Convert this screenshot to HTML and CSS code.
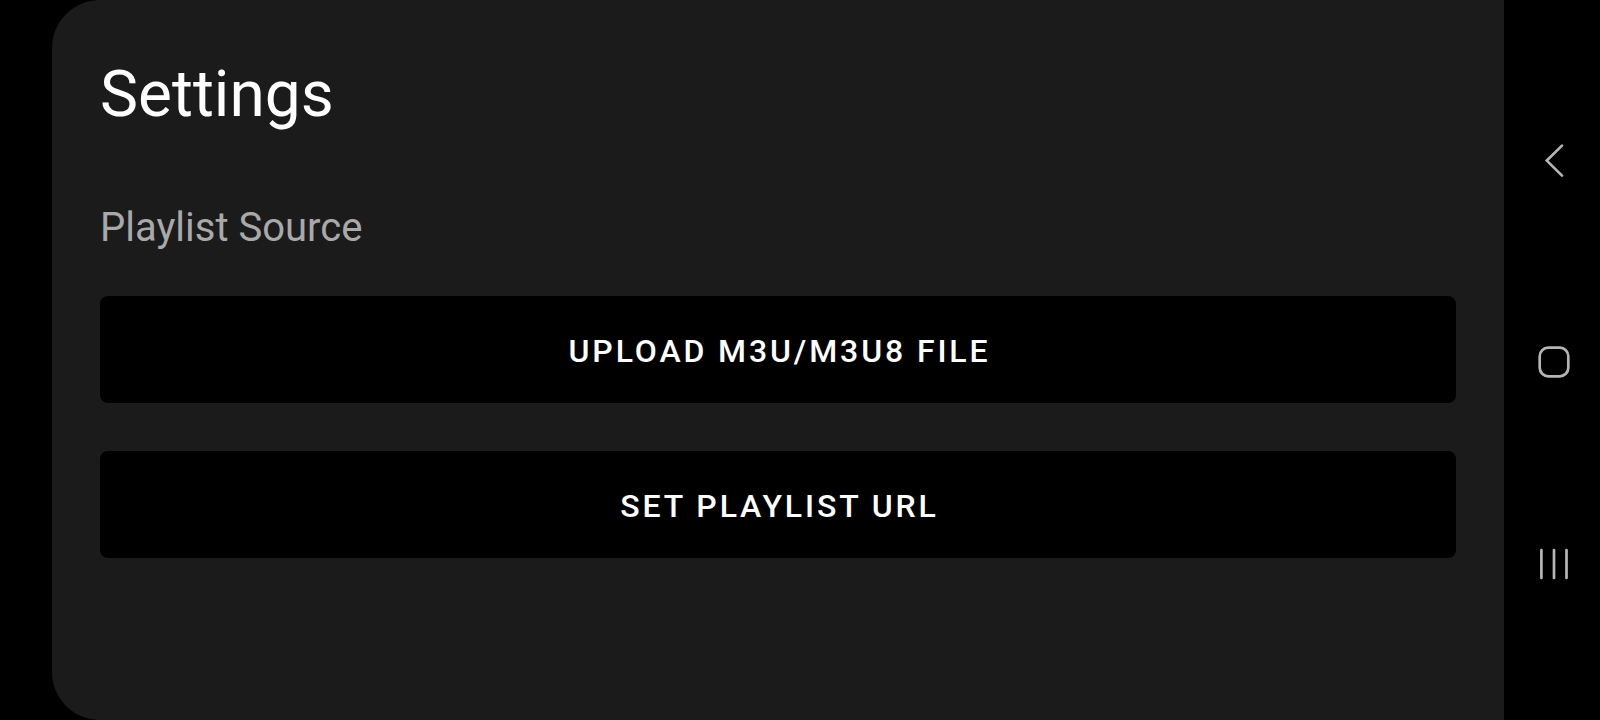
FILE: index.html
```html
<!DOCTYPE html>
<html lang="en">
<head>
<meta charset="utf-8">
<meta name="viewport" content="width=device-width, initial-scale=1">
<title>Settings</title>
<link rel="stylesheet" href="styles.css">
</head>
<body>
<main class="screen">
  <h1 class="title">Settings</h1>
  <section class="group" aria-labelledby="source">
    <h2 class="subtitle" id="source">Playlist Source</h2>
    <button class="action" type="button">UPLOAD M3U/M3U8 FILE</button>
    <button class="action" type="button">SET PLAYLIST URL</button>
  </section>
</main>
<nav class="navbar" aria-label="System navigation">
  <button class="key" type="button" aria-label="Back">
    <svg class="icon" viewBox="0 0 40 40"><path d="M28 5.600 12.800 20.600 28 35.600"/></svg>
  </button>
  <button class="key" type="button" aria-label="Home">
    <svg class="icon" viewBox="0 0 40 40"><rect x="5.700" y="5.700" width="28.600" height="28.600" rx="8.500"/></svg>
  </button>
  <button class="key" type="button" aria-label="Recent apps">
    <svg class="icon" viewBox="0 0 40 40"><path d="M7.400 6V34M20 6V34M32.500 6V34"/></svg>
  </button>
</nav>
</body>
</html>
```
FILE: styles.css
```css
* { box-sizing: border-box; }
body {
  margin: 0;
  min-height: 100vh;
  display: flex;
  padding-left: 52px;
  background: #000;
  color: #fff;
  font-family: Roboto, sans-serif;
}
.screen {
  flex: 1;
  padding: 50px 48px 0;
  background: #1b1b1b;
  border-radius: 48px 0 0 48px;
}
.title {
  margin: 0 0 64px;
  font-size: 64px;
  line-height: 90px;
  font-weight: 400;
}
.group { display: flex; flex-direction: column; }
.subtitle {
  margin: 0 0 44px;
  font-size: 40px;
  line-height: 48px;
  font-weight: 400;
  color: #a9a9a9;
}
.action {
  min-height: 107px;
  margin-bottom: 48px;
  padding: 2px 0 0 3px;
  border: 0;
  border-radius: 8px;
  background: #000;
  color: #fff;
  font: 500 32px/40px Roboto, sans-serif;
  letter-spacing: 0.09em;
}
.navbar {
  width: 96px;
  padding: 4px 0 0 4px;
  display: flex;
  flex-direction: column;
  align-items: center;
  justify-content: center;
  gap: 162px;
}
.key {
  display: flex;
  padding: 0;
  border: 0;
  background: none;
  color: #b5b5b5;
}
.icon {
  width: 40px;
  height: 40px;
  fill: none;
  stroke: currentColor;
  stroke-width: 2.7;
  stroke-linecap: round;
}
```
